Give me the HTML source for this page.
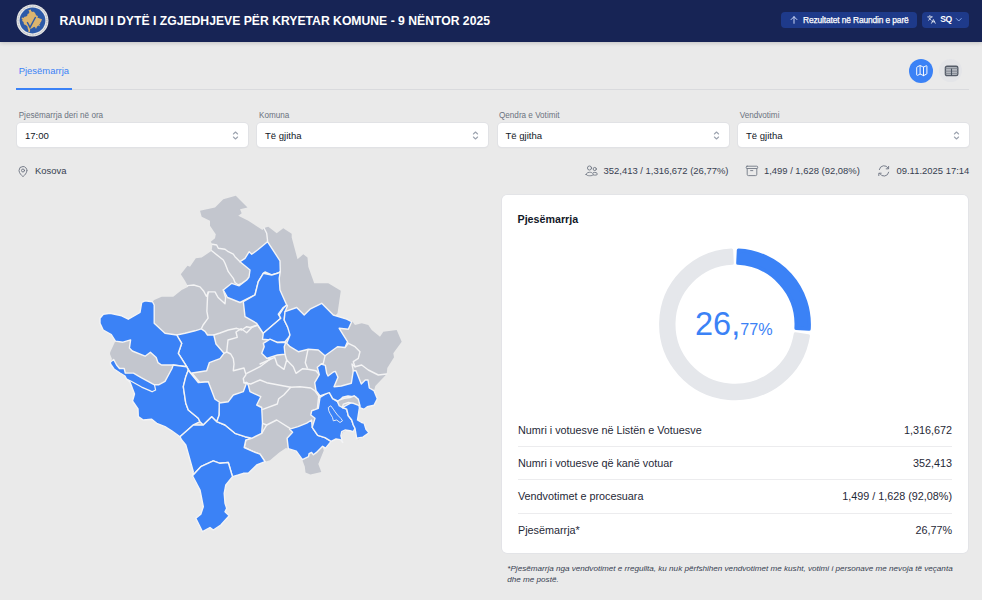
<!DOCTYPE html>
<html><head><meta charset="utf-8">
<style>
*{box-sizing:border-box;margin:0;padding:0}
html,body{width:982px;height:600px;overflow:hidden;background:#eaeaea;font-family:"Liberation Sans",sans-serif;position:relative}
.abs{position:absolute}
#hdr{left:0;top:0;width:982px;height:42px;background:#172455;box-shadow:0 1px 4px rgba(0,0,0,.18)}
#title{left:59.5px;top:13.8px;color:#fff;font-weight:bold;font-size:12.2px;white-space:nowrap;line-height:14px}
.hbtn{background:#1e3a8a;border-radius:4px;color:#fff;height:16px}
#tab{left:18.7px;top:64.5px;color:#3b82f6;font-size:9.45px;line-height:12px}
#tabline{left:16px;top:88.5px;width:953px;height:1px;background:#d9dadd}
#tabul{left:16px;top:87.5px;width:56px;height:2px;background:#3b82f6}
.lbl{font-size:8.14px;color:#6b7280;line-height:10px;top:110.8px;white-space:nowrap}
.inp{top:123px;height:24px;width:231px;background:#fff;border-radius:4px;box-shadow:0 0 0 1px #e1e2e5, 0 1px 2px rgba(0,0,0,.06)}
.inp span{position:absolute;left:8px;top:6.7px;font-size:9.55px;line-height:12px;color:#111827}
.inp svg{position:absolute;left:215px;top:7.5px}
.stat{top:165px;font-size:9.45px;line-height:12px;color:#374151;white-space:nowrap}
#card{left:501.8px;top:194.8px;width:466.5px;height:358.5px;background:#fff;border-radius:5px;box-shadow:0 0 0 0.8px #e1e2e6}
.row{left:518px;width:434px;font-size:10.8px;line-height:13px;color:#1f2937;white-space:nowrap}
.row .v{position:absolute;right:0;top:0}
.sep{left:518px;width:434px;height:1px;background:#ececee}
</style></head><body>
<div id="hdr" class="abs"></div>
<svg class="abs" style="left:16px;top:4px" width="33" height="33" viewBox="0 0 33 33">
 <circle cx="16.5" cy="16.5" r="16" fill="#e8e8e8"/>
 <circle cx="16.5" cy="16.5" r="14.5" fill="none" stroke="#8a8f98" stroke-width="0.7" stroke-dasharray="0.9 0.7"/>
 <circle cx="16.5" cy="16.5" r="12.9" fill="#2d5aa8"/>
 <path d="M14.78 5.58 L15.06 6.49 L14.95 6.94 L16.59 7.90 L16.99 7.68 L18.01 7.79 L18.58 8.41 L19.37 9.55 L19.71 10.40 L20.39 11.53 L21.92 12.04 L21.52 13.74 L22.66 14.08 L23.34 14.25 L24.02 14.71 L24.81 14.82 L26.06 15.50 L25.53 16.56 L25.04 17.70 L24.17 18.83 L24.17 19.83 L23.49 20.10 L23.22 20.03 L23.50 21.04 L23.83 21.70 L23.09 22.16 L22.67 21.61 L22.09 21.61 L22.05 22.36 L21.59 22.12 L20.88 22.74 L20.76 22.91 L20.59 24.36 L19.52 24.40 L19.31 23.57 L18.35 22.78 L17.73 23.03 L16.76 23.66 L15.63 24.45 L14.95 24.57 L14.10 25.25 L14.04 26.49 L14.04 27.06 L13.76 27.97 L13.02 28.14 L12.06 27.51 L12.57 26.72 L11.83 24.73 L11.38 22.52 L10.98 21.96 L9.96 21.28 L9.06 20.77 L8.15 20.60 L7.75 19.53 L7.58 18.24 L7.24 17.83 L6.49 17.36 L6.26 16.88 L6.22 16.34 L6.59 15.46 L5.76 14.71 L5.54 13.91 L6.22 13.57 L7.47 13.97 L8.38 12.84 L9.11 12.78 L9.74 12.44 L11.10 11.98 L11.32 11.36 L11.49 10.34 L12.06 9.83 L13.14 9.32 L13.08 8.70 L13.42 8.19 L13.02 7.28 L12.34 6.60 L13.93 5.81Z" fill="#dcb46e"/>
 <path d="M11.2 18.2 L14 23.4 L19.6 13" fill="none" stroke="#2d5aa8" stroke-width="1.4"/>
</svg>
<div id="title" class="abs">RAUNDI I DYTË I ZGJEDHJEVE PËR KRYETAR KOMUNE - 9 NËNTOR 2025</div>

<div class="abs hbtn" style="left:781px;top:12px;width:135.5px"></div>
<svg class="abs" style="left:789px;top:15px" width="10" height="10" viewBox="0 0 24 24" fill="none" stroke="#dbe4ff" stroke-width="2.2" stroke-linecap="round" stroke-linejoin="round"><path d="M12 20V4M5 11l7-7 7 7"/></svg>
<div class="abs" style="left:803px;top:14.9px;color:#fff;font-size:8.4px;letter-spacing:-0.12px;-webkit-text-stroke:0.25px #fff;line-height:11px;white-space:nowrap">Rezultatet në Raundin e parë</div>
<div class="abs hbtn" style="left:922px;top:11.5px;width:47px;height:16.5px"></div>
<svg class="abs" style="left:927.3px;top:15.3px" width="9" height="9" viewBox="0 0 24 24" fill="none" stroke="#fff" stroke-width="2" stroke-linecap="round" stroke-linejoin="round"><path d="m5 8 6 6M4 14l6-6 2-3M2 5h12M7 2h1M22 22l-5-10-5 10M14 18h6"/></svg>
<div class="abs" style="left:940.3px;top:14.2px;color:#fff;font-weight:bold;font-size:8.6px;letter-spacing:-0.5px;line-height:11px">SQ</div>
<svg class="abs" style="left:955px;top:15.5px" width="7.5" height="7.5" viewBox="0 0 24 24" fill="none" stroke="#8fb0f0" stroke-width="3" stroke-linecap="round" stroke-linejoin="round"><path d="m4 8 8 8 8-8"/></svg>

<div id="tab" class="abs">Pjesëmarrja</div>
<div id="tabline" class="abs"></div>
<div id="tabul" class="abs"></div>
<div class="abs" style="left:908.5px;top:58.6px;width:24.6px;height:24.6px;border-radius:50%;background:#3b82f6"></div>
<svg class="abs" style="left:914.6px;top:64.2px" width="13.6" height="13.6" viewBox="0 0 24 24" fill="none" stroke="#fff" stroke-width="1.7" stroke-linecap="round" stroke-linejoin="round"><path d="M14.1 5.1a2 2 0 0 0 1.8 0l3.7-1.9A1 1 0 0 1 21 4.1v12.8a1 1 0 0 1-.6.9l-4.5 2.3a2 2 0 0 1-1.8 0l-4-2a2 2 0 0 0-1.8 0l-3.7 1.9A1 1 0 0 1 3 19.1V6.2a1 1 0 0 1 .6-.9l4.5-2.3a2 2 0 0 1 1.8 0zM15 5.8v15M9 3.2v15"/></svg>
<div class="abs" style="left:938.5px;top:58.5px;width:23.6px;height:23.6px;border-radius:50%;background:#e4e5e8"></div>
<svg class="abs" style="left:944px;top:65px" width="15" height="12" viewBox="0 0 15 12"><rect x="1.4" y="1.2" width="12.4" height="9.4" rx="1.6" fill="#b3b7bf" stroke="#555c68" stroke-width="1.4"/><path d="M1.4 3.4h12.4M1.4 6.2h12.4M1.4 8.6h12.4" stroke="#7a808a" stroke-width="0.8"/><path d="M7.5 3.6v7" stroke="#4b5563" stroke-width="1.1"/></svg>

<div class="abs lbl" style="left:18.7px">Pjesëmarrja deri në ora</div>
<div class="abs lbl" style="left:259px">Komuna</div>
<div class="abs lbl" style="left:499px">Qendra e Votimit</div>
<div class="abs lbl" style="left:739.7px">Vendvotimi</div>
<div class="abs inp" style="left:17px"><span>17:00</span><svg width="7" height="9" viewBox="0 0 7 9" fill="none" stroke="#9ca3af" stroke-width="1.1" stroke-linecap="round" stroke-linejoin="round"><path d="M1.4 3 3.5 1 5.6 3M1.4 6 3.5 8 5.6 6"/></svg></div>
<div class="abs inp" style="left:257px"><span>Të gjitha</span><svg width="7" height="9" viewBox="0 0 7 9" fill="none" stroke="#9ca3af" stroke-width="1.1" stroke-linecap="round" stroke-linejoin="round"><path d="M1.4 3 3.5 1 5.6 3M1.4 6 3.5 8 5.6 6"/></svg></div>
<div class="abs inp" style="left:497.5px"><span>Të gjitha</span><svg width="7" height="9" viewBox="0 0 7 9" fill="none" stroke="#9ca3af" stroke-width="1.1" stroke-linecap="round" stroke-linejoin="round"><path d="M1.4 3 3.5 1 5.6 3M1.4 6 3.5 8 5.6 6"/></svg></div>
<div class="abs inp" style="left:738px"><span>Të gjitha</span><svg width="7" height="9" viewBox="0 0 7 9" fill="none" stroke="#9ca3af" stroke-width="1.1" stroke-linecap="round" stroke-linejoin="round"><path d="M1.4 3 3.5 1 5.6 3M1.4 6 3.5 8 5.6 6"/></svg></div>

<svg class="abs" style="left:17px;top:164.5px" width="12" height="13" viewBox="0 0 24 24" fill="none" stroke="#6b7280" stroke-width="1.8" stroke-linecap="round" stroke-linejoin="round"><path d="M20 10c0 5-5.5 10.2-7.4 11.8a1 1 0 0 1-1.2 0C9.5 20.2 4 15 4 10a8 8 0 0 1 16 0"/><circle cx="12" cy="10" r="3"/></svg>
<div class="abs stat" style="left:35px">Kosova</div>

<svg class="abs" style="left:582px;top:162px" width="20" height="18" viewBox="0 0 20 18" fill="none" stroke="#6b7280" stroke-width="0.85" stroke-linecap="round" stroke-linejoin="round"><circle cx="7.5" cy="6" r="2.05"/><circle cx="12.75" cy="7" r="1.6"/><path d="M4.1 12.6c0-3.2 7-3.2 7 0 0 1.6-7 1.6-7 0z"/><path d="M11.4 10.6c1.9-0.7 4 0.2 4 1.6 0 0.9-2.4 1.2-4 0.8"/></svg>
<div class="abs stat" style="left:603.6px">352,413 / 1,316,672 (26,77%)</div>
<svg class="abs" style="left:742px;top:162px" width="20" height="18" viewBox="0 0 20 18" fill="none" stroke="#6b7280" stroke-width="0.85" stroke-linecap="round" stroke-linejoin="round"><rect x="4.2" y="4.2" width="11.5" height="2.3" rx="0.9"/><path d="M5.2 6.6v5.8a1.2 1.2 0 0 0 1.2 1.2h7.2a1.2 1.2 0 0 0 1.2-1.2V6.6M8.6 8.6h2.2"/></svg>
<div class="abs stat" style="left:763.9px">1,499 / 1,628 (92,08%)</div>
<svg class="abs" style="left:874px;top:162px" width="20" height="18" viewBox="0 0 20 18" fill="none" stroke="#6b7280" stroke-width="0.9" stroke-linecap="round" stroke-linejoin="round"><path d="M5.3 7.6a4.8 4.8 0 0 1 8.9-1.4"/><path d="M14.6 4.4v2.4h-2.4"/><path d="M14.7 10.2a4.8 4.8 0 0 1-8.9 1.4"/><path d="M4.8 13.6v-2.4h2.4"/></svg>
<div class="abs stat" style="left:896.5px">09.11.2025 17:14</div>

<svg class="abs" style="left:0;top:0" width="982" height="600" viewBox="0 0 982 600">
<polygon points="235.8,195.8 247.5,207.5 240.0,209.2 241.7,213.3 238.3,215.8 248.3,220.8 262.5,230.0 264.0,228.0 268.3,226.7 276.7,233.3 283.3,228.3 291.7,233.7 291.7,237.5 297.5,259.2 303.3,254.2 307.5,257.5 308.3,266.7 314.2,283.3 318.3,283.3 328.3,283.3 340.8,290.8 337.5,313.3 335.0,315.8 346.7,319.2 351.7,320.8 355.0,325.0 361.7,323.3 368.3,325.0 371.7,330.0 380.0,336.7 383.3,331.7 396.7,330.0 401.7,341.7 393.3,353.3 394.0,357.3 387.3,368.0 386.7,374.0 375.3,386.0 374.0,390.7 377.3,398.7 374.0,405.3 367.3,406.7 364.0,409.3 359.3,407.3 360.0,408.3 356.7,420.0 364.1,423.1 366.0,429.2 369.0,432.8 362.9,437.1 358.0,439.6 354.4,430.4 351.9,431.6 348.2,430.4 343.3,431.6 340.9,435.9 342.7,442.6 340.3,439.6 336.0,439.0 331.1,441.4 325.6,448.1 322.6,446.3 323.8,450.6 318.3,464.0 321.3,472.0 310.3,474.4 305.5,472.6 304.8,466.5 302.4,460.3 296.3,451.2 288.3,448.7 285.9,448.1 279.2,452.4 270.0,460.3 265.0,461.7 256.7,465.0 248.3,473.3 243.3,473.3 238.3,475.0 232.5,476.7 225.8,485.0 224.2,493.3 225.0,503.3 226.7,508.3 225.0,511.7 229.2,515.8 220.8,525.0 213.3,530.0 210.0,527.5 202.5,531.7 195.8,518.3 200.8,514.2 203.3,506.7 200.0,490.0 192.5,477.5 193.3,471.7 185.8,445.0 181.7,440.0 180.0,436.7 171.7,430.8 165.0,426.7 156.7,423.3 151.7,419.2 143.3,420.0 138.3,416.7 138.0,409.0 132.5,401.0 134.5,394.0 130.0,382.0 126.5,379.0 125.0,376.0 120.0,373.0 114.0,369.0 110.5,364.0 110.5,362.0 112.0,359.0 110.0,354.0 110.2,352.2 115.4,341.1 111.3,334.7 103.2,330.0 100.0,323.3 100.0,318.3 103.3,314.2 110.0,313.3 121.7,315.8 128.3,319.2 140.0,312.5 141.7,302.5 145.0,300.8 152.5,301.7 154.2,300.0 161.7,296.7 173.3,296.7 181.7,290.0 188.3,286.7 185.0,280.8 180.8,274.2 187.5,265.8 190.0,266.7 195.8,258.3 201.7,257.5 211.7,250.8 212.5,244.2 210.8,241.7 215.0,238.3 215.8,234.2 210.0,225.8 210.0,220.8 201.7,216.7 200.0,210.8 215.0,207.5 223.3,199.2" fill="#c3c6ce"/>
<g fill="none" stroke="#f4f4f5" stroke-width="1.4" stroke-linejoin="round" stroke-linecap="round">
<polyline points="212.5,244.2 216.7,245.0 218.3,248.3 225.0,249.2 228.3,251.7 233.3,254.2 235.0,256.7 240.0,261.7"/>
<polyline points="211.7,250.8 223.3,260.0 225.0,263.3 228.3,271.7 233.3,278.3 235.0,282.5 238.3,285.0 241.7,283.3 246.7,280.0"/>
<polyline points="264.0,228.0 266.7,233.3 267.5,240.0 267.5,241.7"/>
<polyline points="187.5,285.6 193.8,285.0 200.0,286.9 203.8,291.3 206.3,296.3 208.8,291.9 215.0,291.9 218.1,297.5 225.0,303.8 225.6,297.5 223.3,290.0"/>
<polyline points="208.1,291.9 207.5,297.5 206.9,311.3 208.1,318.1 203.1,325.0 201.3,328.8"/>
<polyline points="213.8,335.0 220.0,333.0 228.3,330.0 236.7,328.3 241.7,330.0 246.7,326.7 250.0,327.5 257.5,325.0 263.3,333.3"/>
<polyline points="226.7,352.0 228.0,340.0 237.3,337.3 236.0,332.0 241.3,328.7 246.7,332.7 252.0,327.3 257.3,325.3"/>
<polyline points="224.0,353.3 226.7,352.0 230.7,354.0 233.3,358.7 234.0,364.0 233.3,370.7 244.0,368.0 246.0,374.7 243.3,378.7 244.0,382.7 246.7,382.5"/>
<polyline points="190.7,373.3 192.0,373.3 200.0,382.7 208.3,381.7"/>
<polyline points="246.7,373.3 260.0,366.7 270.7,358.7 266.7,358.3"/>
<polyline points="244.0,382.7 250.7,384.0 260.0,380.0 266.7,382.7 280.0,385.3 290.7,387.3 300.0,386.7 310.7,388.0 314.7,390.7 318.7,396.0 320.0,397.5"/>
<polyline points="260.0,364.0 274.7,357.3 277.3,364.7 284.0,369.3 286.7,360.0 293.3,366.7 296.0,373.3 302.7,368.7 308.0,369.3 316.0,370.7 319.3,374.7"/>
<polyline points="285.0,354.2 286.7,360.0"/>
<polyline points="308.0,349.3 305.3,362.7 307.3,368.0"/>
<polyline points="325.0,355.8 323.3,363.3 321.3,364.0"/>
<polyline points="290.7,387.3 284.0,394.7 278.7,398.7 277.3,404.0 262.7,409.3"/>
<polyline points="318.7,396.0 317.3,409.3 311.7,410.8"/>
<polyline points="261.7,433.3 266.7,425.0 276.7,420.0 290.0,428.3 292.6,432.2"/>
<polyline points="262.5,423.3 266.7,425.0"/>
<polyline points="348.3,343.3 355.0,346.7 360.0,351.7 358.3,358.3 353.3,361.7 355.0,366.7 361.7,365.0 368.3,370.0 378.3,375.0 386.7,374.0"/>
<polyline points="345.0,347.5 348.3,343.3"/>
<polyline points="353.3,370.7 352.0,364.0 355.0,366.7"/>
<polyline points="245.8,440.0 244.2,447.5 253.3,451.7 260.0,454.2 265.0,461.7"/>
</g>
<g fill="#3b82f6" stroke="#f4f4f5" stroke-width="1.4" stroke-linejoin="round">
<polygon points="267.5,241.7 280.0,260.8 280.3,271.7 278.3,273.0 271.7,275.0 265.0,272.0 263.3,273.3 258.3,281.7 255.0,295.0 240.0,302.5 227.5,297.5 223.3,290.0 231.7,283.3 239.2,285.8 246.7,280.0 249.0,277.0 250.0,270.0 240.0,261.7 245.0,258.3 249.2,251.7 251.7,254.2 257.5,250.0"/>
<polygon points="263.3,273.3 271.7,275.0 278.3,273.0 280.3,271.7 279.2,278.3 280.0,290.0 286.7,305.0 283.3,307.5 278.3,314.2 280.8,318.3 263.3,333.3 256.7,323.3 245.0,316.7 243.3,301.7 255.0,295.0 258.3,281.7"/>
<polygon points="286.7,305.0 287.5,305.8 285.0,311.7 284.2,320.0 287.5,326.7 290.8,331.7 289.2,336.7 285.0,341.7 276.7,342.5 270.0,340.0 262.5,339.2 263.3,333.3 280.8,318.3 279.2,315.0 283.3,308.3"/>
<polygon points="263.3,343.3 270.0,339.2 277.5,342.5 285.8,342.5 284.2,346.7 285.0,354.2 277.5,355.0 266.7,358.3 261.7,353.3 264.2,346.7"/>
<polygon points="285.0,311.7 296.7,307.5 304.2,315.0 310.0,309.2 321.7,303.3 333.3,315.0 346.7,319.2 351.7,321.7 348.3,329.2 339.2,328.3 347.5,341.7 345.0,347.5 337.5,346.7 325.0,355.8 318.3,350.0 308.3,349.2 298.3,351.7 290.0,346.7 286.7,343.3 290.0,335.0 287.5,326.7 284.2,320.0"/>
<polygon points="176.7,335.0 185.0,333.3 195.0,330.8 201.3,328.8 205.0,331.3 207.5,335.0 213.8,335.0 216.0,344.0 224.0,353.3 220.0,358.7 209.3,362.7 206.7,370.7 190.7,373.3 186.7,366.7 178.3,353.3 181.7,343.3"/>
<polygon points="100.0,318.3 103.3,314.2 110.0,313.3 121.7,315.8 128.3,319.2 140.0,312.5 141.7,302.5 145.0,300.8 152.5,301.7 154.2,305.0 154.2,323.3 165.0,333.3 176.7,335.0 181.7,343.3 178.3,353.3 186.7,366.7 173.1,365.0 161.5,365.0 158.0,362.7 156.2,357.4 150.4,352.2 145.1,356.2 132.3,351.0 129.4,348.1 130.6,339.9 123.0,342.2 115.4,341.1 111.3,334.7 103.2,330.0 100.0,323.3"/>
<polygon points="110.5,362.0 113.7,359.5 116.6,365.0 119.5,368.5 124.2,368.5 125.3,373.1 133.5,373.1 141.6,377.8 154.5,384.8 158.6,384.8 165.0,381.3 172.0,368.5 173.1,365.0 186.7,366.7 188.3,370.0 185.8,376.7 183.3,386.7 185.8,403.3 188.3,410.0 198.3,418.3 200.0,421.7 193.3,425.0 180.0,436.7 171.7,430.8 165.0,426.7 156.7,423.3 151.7,419.2 143.3,420.0 138.3,416.7 138.0,409.0 132.5,401.0 134.5,394.0 130.0,382.0 126.5,379.0 125.0,376.0 120.0,373.0 114.0,369.0 110.5,364.0"/>
<polygon points="188.3,370.0 190.7,373.3 198.3,382.5 208.3,381.7 215.0,399.2 220.0,402.5 219.2,415.0 216.7,421.7 211.7,416.7 203.3,425.0 200.0,421.7 198.3,418.3 188.3,410.0 185.8,403.3 183.3,386.7 185.8,376.7"/>
<polygon points="180.0,436.7 193.3,425.0 203.3,425.0 211.7,416.7 216.7,421.7 225.0,425.0 235.0,433.3 245.0,436.7 251.7,438.3 245.8,440.0 244.2,447.5 253.3,451.7 260.0,454.2 265.0,461.7 256.7,465.0 248.3,473.3 243.3,473.3 238.3,475.0 232.5,476.7 228.3,462.5 220.0,463.3 213.3,460.8 200.8,466.7 192.5,475.8 193.3,471.7 185.8,445.0 181.7,440.0"/>
<polygon points="192.5,475.8 200.8,466.7 213.3,460.8 220.0,463.3 228.3,462.5 232.5,476.7 225.8,485.0 224.2,493.3 225.0,503.3 226.7,508.3 225.0,511.7 229.2,515.8 220.8,525.0 213.3,530.0 210.0,527.5 202.5,531.7 195.8,518.3 200.8,514.2 203.3,506.7 200.0,490.0"/>
<polygon points="219.2,403.0 228.3,401.7 233.3,395.0 243.3,391.7 246.7,382.5 248.3,385.0 250.0,391.7 260.8,396.7 256.7,405.0 261.7,407.5 262.5,423.3 261.7,433.3 251.7,438.3 245.0,436.7 235.0,433.3 225.0,425.0 216.7,421.7 219.2,415.0"/>
<polygon points="287.1,438.3 292.6,432.2 289.6,429.2 298.1,426.7 306.7,423.1 311.6,420.0 312.2,427.3 317.7,435.3 325.0,437.7 331.1,441.4 325.6,448.1 322.6,446.3 316.5,452.4 313.4,454.8 311.6,452.4 309.1,453.6 308.5,456.7 302.4,459.7 296.3,451.2 288.3,448.7"/>
<polygon points="311.7,410.8 318.3,408.3 320.0,397.5 329.2,391.7 332.7,398.7 337.5,401.7 342.5,407.5 346.7,409.2 348.3,415.8 351.7,420.0 353.3,425.0 355.0,428.3 353.3,431.7 350.0,430.8 345.0,430.0 341.7,431.7 340.9,435.9 342.7,442.6 340.3,439.6 336.0,439.0 331.1,441.4 325.0,437.7 317.7,435.3 312.2,427.3 315.0,418.3 310.8,415.0"/>
<polygon points="342.5,407.5 350.0,403.3 358.3,399.2 360.0,405.8 359.2,409.2 357.5,420.0 361.7,422.5 364.1,423.1 366.0,429.2 369.0,432.8 362.9,437.1 356.7,438.3 355.0,428.3 353.3,425.0 351.7,420.0 348.3,415.8 346.7,409.2"/>
<polygon points="317.3,367.3 321.3,364.0 325.3,365.3 326.7,373.3 328.0,376.0 333.3,372.0 335.3,371.3 338.0,377.3 334.0,386.7 341.3,386.0 351.3,383.3 353.3,370.7 356.0,370.7 361.3,384.0 365.3,380.0 368.0,380.0 369.3,388.0 374.0,390.7 377.3,398.7 374.0,405.3 367.3,406.7 364.0,409.3 359.3,407.3 358.7,402.7 356.0,397.3 348.0,396.0 342.7,397.3 338.7,401.3 332.7,398.7 329.3,392.7 320.0,396.0 316.0,390.7 314.7,382.7 319.3,374.7"/>
</g>
<polygon points="337.5,401.7 339.2,400.0 344.2,398.3 350.0,397.5 354.2,395.8 358.3,399.2 360.0,405.8 353.3,403.3 348.3,402.5 343.3,404.2 342.5,407.5 339.2,405.8" fill="#c3c6ce" stroke="#f4f4f5" stroke-width="1.4"/>
<polyline points="126.5,379.0 131.2,381.3 141.6,387.1 149.8,390.6 152.1,391.8 155.6,390.0 154.5,384.8" fill="none" stroke="#f4f4f5" stroke-width="1.2" stroke-linejoin="round"/>
<polygon points="328.3,407.5 330.8,405.8 333.3,409.2 335.0,411.7 337.5,415.0 340.8,418.3 342.5,420.8 340.0,422.5 336.7,420.0 333.3,420.8 332.5,417.5 330.0,413.3 328.8,410.8" fill="#3b82f6" stroke="#f4f4f5" stroke-width="0.9"/>
</svg>

<div id="card" class="abs"></div>
<div class="abs" style="left:517.5px;top:212.8px;font-weight:bold;font-size:10.7px;line-height:12px;color:#111827">Pjesëmarrja</div>
<svg class="abs" style="left:655px;top:244px" width="160" height="160" viewBox="0 0 160 160">
<path d="M153.27 92.00A74.2 74.2 0 1 1 76.50 6.18L77.12 19.17A61.2 61.2 0 1 0 140.43 89.95Z" fill="#e5e7eb" stroke="#e5e7eb" stroke-width="3.4" stroke-linejoin="round"/>
<path d="M83.50 6.18A74.2 74.2 0 0 1 154.05 85.05L141.07 84.22A61.2 61.2 0 0 0 82.88 19.17Z" fill="#3b82f6" stroke="#3b82f6" stroke-width="3.4" stroke-linejoin="round"/>

</svg>
<div class="abs" style="left:695px;top:306.3px;color:#3b82f6;white-space:nowrap;line-height:36px"><span style="font-size:32.5px">26,</span><span style="font-size:16.2px">77%</span></div>

<div class="abs row" style="top:423.5px">Numri i votuesve në Listën e Votuesve<span class="v">1,316,672</span></div>
<div class="abs sep" style="top:446px"></div>
<div class="abs row" style="top:456.5px">Numri i votuesve që kanë votuar<span class="v">352,413</span></div>
<div class="abs sep" style="top:479px"></div>
<div class="abs row" style="top:490px">Vendvotimet e procesuara<span class="v">1,499 / 1,628 (92,08%)</span></div>
<div class="abs sep" style="top:512.5px"></div>
<div class="abs row" style="top:523.5px">Pjesëmarrja*<span class="v">26,77%</span></div>

<div class="abs" style="left:507.3px;top:562.7px;width:460px;font-style:italic;font-size:8.12px;line-height:11px;color:#374151">*Pjesëmarrja nga vendvotimet e rregullta, ku nuk përfshihen vendvotimet me kusht, votimi i personave me nevoja të veçanta dhe me postë.</div>
</body></html>
